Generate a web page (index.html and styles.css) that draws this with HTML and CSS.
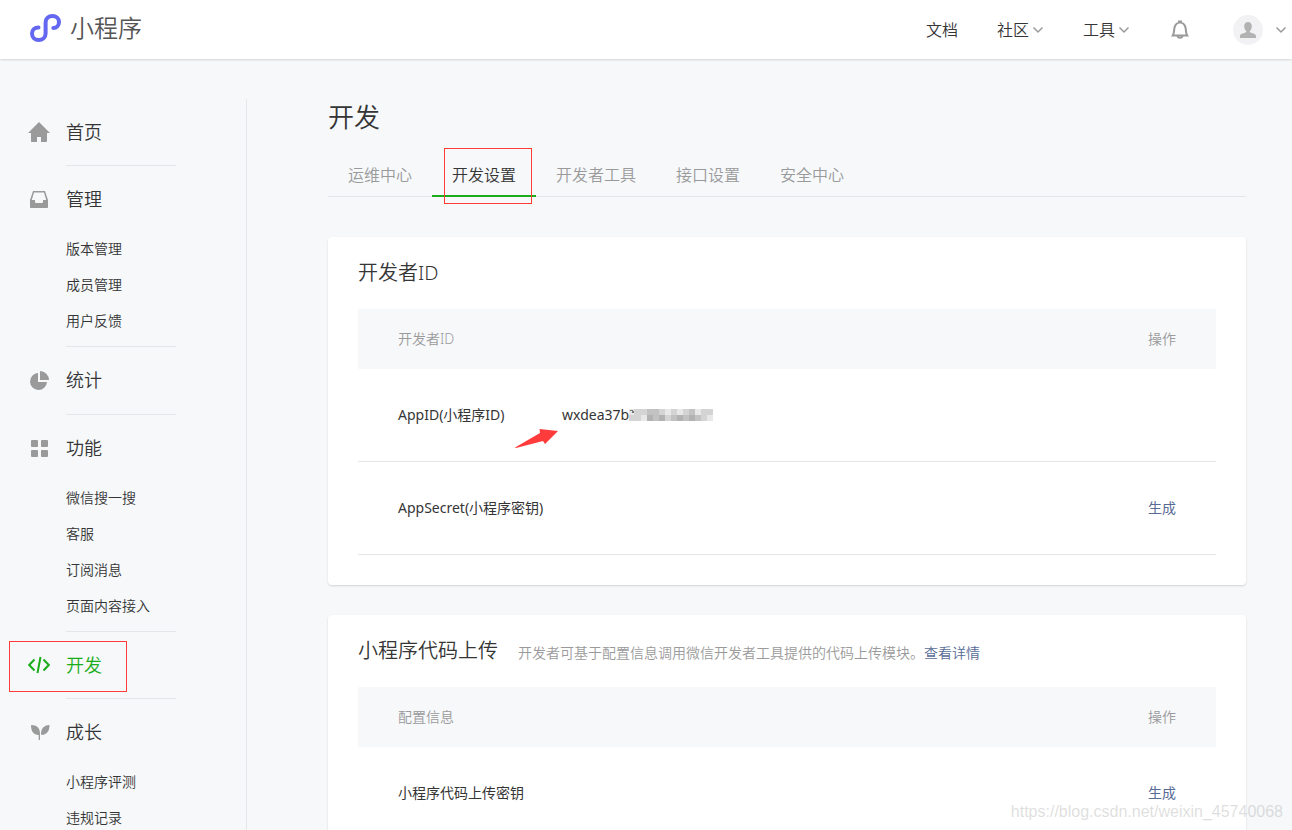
FILE: index.html
```html
<!DOCTYPE html>
<html lang="zh-CN">
<head>
<meta charset="utf-8">
<title>小程序</title>
<link rel="stylesheet" href="styles.css">
</head>
<body>
<div class="page">
  <header class="header">
    <a class="brand" href="#">
      <svg class="brand-logo" viewBox="0 0 32 28" aria-hidden="true"><path d="M8.500 13.500C4.500 13.500 2 16.300 2 19.500C2 23.300 5 26 8.700 26C12.500 26 15.600 23.300 15.600 19.500V8.500C15.600 4.700 18.600 2 22.400 2C26.200 2 29 4.700 29 8C29 11.500 26.500 14 23.300 14"/></svg>
      <span>小程序</span>
    </a>
    <nav class="top-nav">
      <a class="top-link" href="#">文档</a>
      <a class="top-link" href="#">社区<svg class="chevron" viewBox="0 0 12 8"><path d="M1.500 1.500l4.500 4.500 4.500-4.500"/></svg></a>
      <a class="top-link" href="#">工具<svg class="chevron" viewBox="0 0 12 8"><path d="M1.500 1.500l4.500 4.500 4.500-4.500"/></svg></a>
      <button class="icon-button bell" type="button" aria-label="通知"><svg viewBox="0 0 18 20"><path d="M1.800 15.500C3.300 13.500 2.800 11 3.400 8C4 5 5.500 3.200 8 2.600V1.500H10V2.600C12.500 3.200 14 5 14.600 8C15.200 11 14.700 13.500 16.200 15.500Z"/><path d="M6.500 16C7 18.300 11 18.300 11.500 16"/></svg></button>
      <button class="icon-button account" type="button" aria-label="账号">
        <span class="avatar"><svg viewBox="0 0 16 16"><path d="M8 0C10.500 0 11.800 1.700 11.800 4.200C11.800 6.500 10.800 8 9.800 8.900V10.300C12 11.300 16 11.800 16 14V16H0V14C0 11.800 4 11.300 6.200 10.300V8.900C5.200 8 4.200 6.500 4.200 4.200C4.200 1.700 5.500 0 8 0Z"/></svg></span>
        <svg class="chevron" viewBox="0 0 12 8"><path d="M1.500 1.500l4.500 4.500 4.500-4.500"/></svg>
      </button>
    </nav>
  </header>

  <div class="body">
    <nav class="sidebar">
      <section class="group">
        <a class="group-title" href="#"><svg class="group-icon" viewBox="0 0 22 22"><path d="M11 1L22 12H19V20C19 20.700 18.700 21 18 21H13V16H9V21H4C3.300 21 3 20.700 3 20V12H0Z"/></svg>首页</a>
      </section>
      <section class="group">
        <a class="group-title" href="#"><svg class="group-icon" viewBox="0 0 22 22"><path fill-rule="evenodd" d="M5 3H17L20 12V19C20 19.700 19.700 20 19 20H3C2.300 20 2 19.700 2 19V12ZM6 4.500L3.800 12H7V13.500C7 14.500 7.500 15 8.500 15H13.500C14.500 15 15 14.500 15 13.500V12H18.200L16 4.500Z"/></svg>管理</a>
        <ul class="group-list">
          <li><a href="#">版本管理</a></li>
          <li><a href="#">成员管理</a></li>
          <li><a href="#">用户反馈</a></li>
        </ul>
      </section>
      <section class="group">
        <a class="group-title" href="#"><svg class="group-icon" viewBox="0 0 22 22"><path d="M10 4V13H19A8.500 8.500 0 1 1 10 4Z"/><path d="M12 2A9 9 0 0 1 21 11H12Z"/></svg>统计</a>
      </section>
      <section class="group">
        <a class="group-title" href="#"><svg class="group-icon" viewBox="0 0 22 22"><rect x="3" y="3" width="7" height="7" rx="1"/><rect x="13" y="3" width="7" height="7" rx="1"/><rect x="3" y="13" width="7" height="7" rx="1"/><rect x="13" y="13" width="7" height="7" rx="1"/></svg>功能</a>
        <ul class="group-list">
          <li><a href="#">微信搜一搜</a></li>
          <li><a href="#">客服</a></li>
          <li><a href="#">订阅消息</a></li>
          <li><a href="#">页面内容接入</a></li>
        </ul>
      </section>
      <section class="group current">
        <a class="group-title active marked" href="#"><svg class="group-icon code" viewBox="0 0 22 22"><path d="M6.500 5.500L1.200 11L6.500 16.500M15.500 5.500L20.800 11L15.500 16.500M12.500 3L9.500 19"/></svg>开发</a>
      </section>
      <section class="group">
        <a class="group-title" href="#"><svg class="group-icon" viewBox="0 0 22 22"><path d="M3 4C9 4 12 7 12 13V19H10.700V13.900C6 14 3 11 3 4Z"/><path d="M21.500 4C21.500 10.500 18.500 14 13 13.800C12.800 8 15.500 4.200 21.500 4Z"/></svg>成长</a>
        <ul class="group-list">
          <li><a href="#">小程序评测</a></li>
          <li><a href="#">违规记录</a></li>
        </ul>
      </section>
    </nav>

    <main class="main">
      <h1>开发</h1>
      <nav class="tabs">
        <a class="tab" href="#">运维中心</a>
        <a class="tab active" href="#">开发设置</a>
        <a class="tab" href="#">开发者工具</a>
        <a class="tab" href="#">接口设置</a>
        <a class="tab" href="#">安全中心</a>
      </nav>

      <section class="card">
        <div class="card-head"><h2>开发者ID</h2></div>
        <table>
          <colgroup><col class="col-label"><col><col class="col-action"></colgroup>
          <thead><tr><th class="label" colspan="2">开发者ID</th><th class="action">操作</th></tr></thead>
          <tbody>
            <tr>
              <td class="label">AppID(小程序ID)</td>
              <td class="value"><span class="app-id">wxdea37b<svg class="mosaic" viewBox="0 0 84 12" aria-hidden="true">
                <rect width="84" height="12" fill="#d4d4d4"/>
                <path fill="#e8e8e8" d="M0 0h5v6h-5zM12 6h6v6h-6zM36 0h6v6h-6zM48 0h6v6h-6zM66 0h6v6h-6zM78 6h6v6h-6z"/>
                <path fill="#c2c2c2" d="M18 0h12v6h-12zM24 6h6v6h-6zM42 6h6v6h-6zM54 6h6v6h-6zM60 0h6v6h-6zM66 6h6v6h-6z"/>
                <path fill="#b2b2b2" d="M18 6h6v6h-6zM30 6h6v6h-6zM48 6h6v6h-6zM60 6h6v6h-6z"/>
                <path fill="#777" d="M1 1h3v1h-3zM3 2h2v2h-2z"/>
              </svg></span><svg class="arrow" viewBox="0 0 44 20" aria-hidden="true"><path d="M0 18.500L25 4L24.500 0L43 2L30 15L28 12L1 19Z"/></svg></td>
              <td class="action"></td>
            </tr>
            <tr>
              <td class="label">AppSecret(小程序密钥)</td>
              <td class="value"></td>
              <td class="action"><a href="#">生成</a></td>
            </tr>
          </tbody>
        </table>
      </section>

      <section class="card">
        <div class="card-head"><h2>小程序代码上传</h2><p>开发者可基于配置信息调用微信开发者工具提供的代码上传模块。<a href="#">查看详情</a></p></div>
        <table>
          <colgroup><col class="col-label"><col><col class="col-action"></colgroup>
          <thead><tr><th class="label" colspan="2">配置信息</th><th class="action">操作</th></tr></thead>
          <tbody>
            <tr>
              <td class="label">小程序代码上传密钥</td>
              <td class="value"></td>
              <td class="action"><a href="#">生成</a></td>
            </tr>
          </tbody>
        </table>
      </section>
    </main>
  </div>
  <div class="watermark">https://blog.csdn.net/weixin_45740068</div>
</div>
</body>
</html>
```
FILE: styles.css
```css
*, *::before, *::after { box-sizing: border-box; }
body {
  margin: 0;
  background: #f6f8fa;
  color: #353535;
  font: 350 14px/20px "Noto Sans", "Noto Sans CJK SC", sans-serif;
}
a { color: inherit; text-decoration: none; }
h1, h2, p, ul { margin: 0; padding: 0; font-weight: inherit; }
li { list-style: none; }
.page { position: relative; height: 100vh; overflow: hidden; }

.header {
  display: flex;
  align-items: center;
  justify-content: space-between;
  height: 59px;
  padding: 0 6px 0 30px;
  background: #fff;
  box-shadow: 0 1px 2px rgba(0, 0, 0, 0.15);
}
.brand { display: flex; align-items: center; gap: 8px; height: 56px; padding-bottom: 4px; font-size: 24px; line-height: 32px; color: #555; }
.brand-logo { width: 32px; height: 28px; fill: none; stroke: #6467f0; stroke-width: 4; stroke-linecap: round; }
.top-nav { display: flex; align-items: center; font-size: 16px; }
.top-link { display: flex; align-items: center; gap: 3px; margin-right: 39px; }
.chevron { width: 12px; height: 8px; fill: none; stroke: #9a9a9a; stroke-width: 1.5; }
.icon-button { display: flex; align-items: center; padding: 0; border: 0; background: none; }
.bell { margin: 0 44px 0 2px; }
.bell svg { width: 18px; height: 20px; fill: none; stroke: #9a9a9a; stroke-width: 2; }
.account { gap: 12px; margin-right: -1px; }
.avatar { display: flex; align-items: center; justify-content: center; width: 30px; height: 30px; border-radius: 50%; background: #f2f2f4; }
.avatar svg { width: 16px; height: 16px; fill: #b2b2b2; }

.body { display: flex; align-items: stretch; padding: 40px 46px 0 0; }
.sidebar { flex: none; width: 247px; min-height: 100vh; border-right: 1px solid #e4e6e9; }
.group { min-height: 68px; }
.group:first-child { min-height: 66px; }
.group.current { min-height: 67px; }
.group + .group::before { content: ""; display: block; width: 110px; height: 1px; margin-left: 66px; background: #e4e6e9; }
.group-title { display: flex; align-items: center; gap: 16px; height: 65px; padding-left: 28px; font-size: 18px; }
.group-icon { width: 22px; height: 22px; fill: #9a9a9a; }
.group-title.active { position: relative; color: #1aad19; }
.group-icon.code { fill: none; stroke: #1aad19; stroke-width: 2; }
.group-title.marked::after { content: ""; position: absolute; left: 9px; top: 9px; width: 118px; height: 51px; border: 1px solid #ff3b3b; }
.group-list { padding: 0 0 7px 66px; }
.group-list li { line-height: 36px; }

.main { flex: 1; min-width: 0; margin-left: 81px; }
h1 { font-size: 26px; line-height: 36px; }
.tabs { display: flex; margin: 18px 0 40px; border-bottom: 1px solid #e4e6e9; font-size: 16px; }
.tab { position: relative; height: 44px; margin-bottom: -1px; padding: 0 20px; line-height: 44px; color: #9a9a9a; }
.tab.active { border-bottom: 2px solid #1aad19; color: #353535; }
.tab.active::after { content: ""; position: absolute; left: 12px; top: -5px; width: 88px; height: 56px; border: 1px solid #ff3b3b; }

.card { margin-bottom: 30px; padding: 0 30px 30px; border-radius: 4px; background: #fff; box-shadow: 0 1px 2px rgba(0, 0, 0, 0.15); }
.card-head { display: flex; align-items: baseline; gap: 20px; line-height: 72px; height: 72px; }
h2 { font-size: 20px; }
.card-head p { color: #9a9a9a; }
.card a { color: #576b95; }
table { width: 100%; border-collapse: separate; border-spacing: 0; table-layout: fixed; }
.col-label { width: 204px; }
.col-action { width: 160px; }
th { height: 60px; padding: 0; background: #f6f8fa; color: #9a9a9a; font-weight: inherit; text-align: left; }
td { height: 93px; padding: 0; border-bottom: 1px solid #e4e6e9; font-weight: 400; }
.label { padding-left: 40px; white-space: nowrap; }
.action { padding-right: 40px; text-align: right; }
.value { position: relative; }
.app-id { display: flex; align-items: center; }
.mosaic { width: 84px; height: 12px; }
.arrow { position: absolute; left: -47px; top: 60px; width: 44px; height: 20px; fill: #ff3b3b; }

.watermark { position: absolute; right: 9px; bottom: 8px; color: rgba(160, 160, 160, 0.35); font: 16px/20px "Liberation Sans", sans-serif; }
```
